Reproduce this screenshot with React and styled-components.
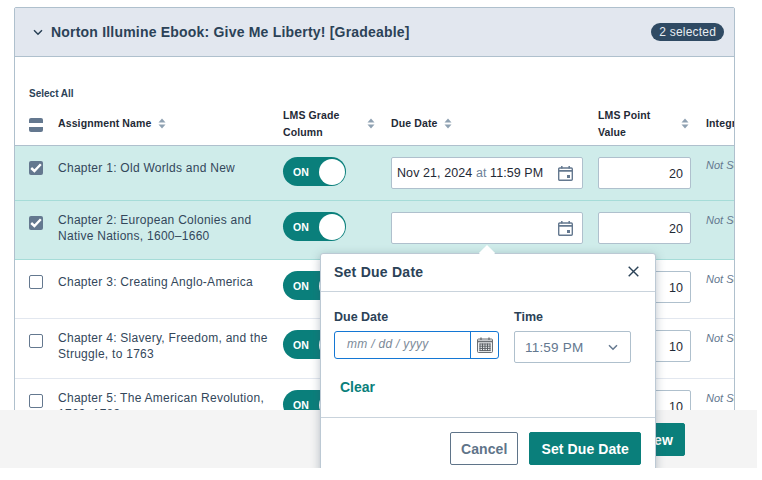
import React from "react";
import styled, { createGlobalStyle } from "styled-components";

const GlobalStyle = createGlobalStyle`
  html, body {
    margin: 0;
    padding: 0;
    background: #fff;
    font-family: "Liberation Sans", Arial, sans-serif;
  }
`;

const Page = styled.div`
  position: relative;
  width: 757px;
  height: 468px;
  overflow: hidden;
  padding: 7px 22px 0 14px;
  box-sizing: border-box;
`;

const Panel = styled.section`
  border: 1px solid #afc0cd;
  border-radius: 2px;
  overflow: hidden;
`;

const PanelHeader = styled.header`
  display: flex;
  align-items: center;
  height: 48px;
  padding: 0 10px 0 18px;
  background: #e2e7ef;
  border-bottom: 1px solid #afc0cd;
`;

const Title = styled.h2`
  flex: 1;
  margin: 0 0 0 8px;
  font-size: 14px;
  font-weight: 700;
  letter-spacing: 0.2px;
  color: #2b4257;
`;

const Badge = styled.span`
  background: #2f4a63;
  color: #e8edf2;
  font-size: 12px;
  line-height: 18px;
  padding: 0 8px;
  border-radius: 9px;
  letter-spacing: 0.2px;
`;

const SelectAll = styled.div`
  padding: 30px 0 0 14px;
  height: 44px;
  box-sizing: border-box;
  font-size: 10px;
  font-weight: 700;
  line-height: 13px;
  color: #2b4257;
`;

const cols = "29px 225px 108px 207px 108px 120px";

const HeadRow = styled.div`
  display: grid;
  grid-template-columns: ${cols};
  align-items: center;
  width: 811px;
  height: 45px;
  padding: 1px 0 0 14px;
  border-bottom: 1px solid #afc0cd;
  box-sizing: border-box;
`;

const HeadCell = styled.div`
  display: flex;
  align-items: center;
  justify-content: ${(p) => (p.$spread ? "space-between" : "flex-start")};
  width: ${(p) => p.$w || "auto"};
  gap: 7px;
  font-size: 10.5px;
  font-weight: 700;
  line-height: 17px;
  letter-spacing: 0.12px;
  color: #1f2a36;
  white-space: nowrap;
`;

const Row = styled.div`
  display: grid;
  grid-template-columns: ${cols};
  width: 811px;
  height: ${(p) => p.$h}px;
  padding: 11px 0 0 14px;
  box-sizing: border-box;
  background: ${(p) => (p.$on ? "#cfecea" : "#fff")};
  border-bottom: 1px solid ${(p) => (p.$on ? "#a6dcd8" : "#e2e7ef")};
`;

const Check = styled.span`
  display: flex;
  align-items: center;
  justify-content: center;
  width: 14px;
  height: 14px;
  margin-top: ${(p) => (p.$head ? "3px" : "4px")};
  border-radius: 2px;
  box-sizing: border-box;
  background: ${(p) => (p.$filled ? "#64788f" : "#fff")};
  border: ${(p) => (p.$filled ? "none" : "1px solid #64788f")};
`;

const Name = styled.div`
  display: flex;
  align-items: center;
  align-self: start;
  width: 216px;
  min-height: 22px;
  font-size: 12px;
  line-height: 16px;
  letter-spacing: 0.27px;
  color: #33475b;
`;

const Toggle = styled.div`
  display: flex;
  align-items: center;
  justify-content: space-between;
  width: 63px;
  height: 29px;
  padding: 0 1px 0 10px;
  box-sizing: border-box;
  border-radius: 15px;
  background: #0a7f7b;
  color: #fff;
  font-size: 10.5px;
  font-weight: 700;
`;

const Knob = styled.span`
  width: 26px;
  height: 26px;
  border-radius: 50%;
  background: #fff;
`;

const DateBox = styled.div`
  display: flex;
  align-items: center;
  justify-content: space-between;
  width: 192px;
  height: 32px;
  padding: 0 9px 0 5px;
  box-sizing: border-box;
  background: #fff;
  border: 1px solid #afc0cd;
  border-radius: 2px;
  font-size: 12.5px;
  letter-spacing: 0.08px;
  color: #1f2a36;
`;

const At = styled.span`
  color: #6d8299;
`;

const PointBox = styled.div`
  width: 93px;
  height: 32px;
  padding: 0 7px;
  box-sizing: border-box;
  background: #fff;
  border: 1px solid #afc0cd;
  border-radius: 2px;
  font-size: 12.5px;
  line-height: 32px;
  text-align: right;
  color: #1f2a36;
`;

const NotSet = styled.div`
  font-size: 11px;
  font-style: italic;
  line-height: 13px;
  margin-top: 2px;
  color: #64788f;
`;

const Footer = styled.footer`
  position: absolute;
  left: 0;
  right: 0;
  bottom: 0;
  height: 58px;
  display: flex;
  justify-content: flex-end;
  padding: 13px 72px 0 0;
  box-sizing: border-box;
  background: #f4f4f4;
`;

const Button = styled.button`
  height: 33px;
  padding: 0 ${(p) => (p.$ghost ? 10 : 11)}px;
  box-sizing: border-box;
  border-radius: 2px;
  border: 1px solid ${(p) => (p.$ghost ? "#5f7489" : "#0a7f7b")};
  background: ${(p) => (p.$ghost ? "#fff" : "#0a7f7b")};
  color: ${(p) => (p.$ghost ? "#5f7489" : "#fff")};
  font-family: inherit;
  font-size: 14px;
  font-weight: 700;
  letter-spacing: 0.1px;
`;

const Popover = styled.div`
  position: absolute;
  left: 320px;
  top: 253px;
  width: 336px;
  border: 1px solid #bcc9d4;
  border-radius: 3px;
  box-sizing: border-box;
  background: #fff;
  box-shadow: 0 2px 10px rgba(60, 80, 100, 0.35);

  &::before {
    content: "";
    position: absolute;
    left: 159px;
    top: -8px;
    width: 14px;
    height: 14px;
    background: #fff;
    transform: rotate(45deg) scale(0.82);
  }
`;

const PopHeader = styled.div`
  position: relative;
  display: flex;
  align-items: center;
  justify-content: space-between;
  height: 38px;
  padding: 0 16px 2px 13px;
  box-sizing: border-box;
  border-bottom: 1px solid #c9d3dc;
`;

const PopTitle = styled.h3`
  margin: 0;
  font-size: 14px;
  font-weight: 700;
  letter-spacing: 0.25px;
  color: #2b4257;
`;

const PopBody = styled.div`
  height: 126px;
  padding: 17px 13px 0;
  box-sizing: border-box;
  border-bottom: 1px solid #c9d3dc;
`;

const Fields = styled.div`
  display: flex;
  gap: 15px;
`;

const Field = styled.div`
  display: flex;
  flex-direction: column;
  gap: 6px;
`;

const Label = styled.label`
  font-size: 12.5px;
  font-weight: 700;
  line-height: 16px;
  color: #2b4257;
`;

const DateInput = styled.div`
  display: flex;
  width: 165px;
  height: 28px;
  box-sizing: border-box;
  border: 1px solid #1477d4;
  border-radius: 3px;
`;

const Placeholder = styled.span`
  flex: 1;
  padding-left: 12px;
  border-right: 1px solid #1477d4;
  font-size: 12px;
  font-style: italic;
  line-height: 24px;
  letter-spacing: 0.3px;
  color: #7c8a98;
`;

const CalButton = styled.span`
  display: flex;
  align-items: center;
  justify-content: center;
  width: 27px;
`;

const Select = styled.div`
  display: flex;
  align-items: center;
  justify-content: space-between;
  width: 117px;
  height: 32px;
  padding: 0 12px 0 10px;
  box-sizing: border-box;
  border: 1px solid #afc0cd;
  border-radius: 2px;
  font-size: 13.5px;
  letter-spacing: 0.2px;
  color: #64788f;
`;

const Clear = styled.a`
  display: block;
  margin: 15px 0 0 6px;
  font-size: 14px;
  font-weight: 700;
  line-height: 18px;
  color: #0a7f7b;
`;

const PopFooter = styled.div`
  display: flex;
  justify-content: flex-end;
  gap: 11px;
  padding: 14px 14px 8px;
`;

const Sort = () => (
  <svg width="8" height="11" viewBox="0 0 8 11" fill="#8fa1b2">
    <path d="M4 0.5 7.5 4.5H.5Z" />
    <path d="M4 10.5 .5 6.5H7.5Z" />
  </svg>
);

const Chevron = ({ color = "#2b4257" }) => (
  <svg width="10" height="7" viewBox="0 0 10 7" fill="none" stroke={color} strokeWidth="1.5">
    <path d="M1 1.2 5 5.2 9 1.2" />
  </svg>
);

const CheckMark = () => (
  <svg width="12" height="10" viewBox="0 0 12 10" fill="none" stroke="#fff" strokeWidth="2.4">
    <path d="M1.2 5 4.4 8 10.8 1.2" />
  </svg>
);

const CalendarIcon = () => (
  <svg width="15" height="15" viewBox="0 0 15 15" fill="none">
    <rect x="0.7" y="2" width="13.6" height="12.3" rx="1" stroke="#64788f" strokeWidth="1.4" />
    <path d="M1 4.8H14" stroke="#64788f" strokeWidth="1.8" />
    <path d="M3.8 0V2.5M11.2 0V2.5" stroke="#64788f" strokeWidth="1.5" />
    <rect x="9" y="9" width="3" height="3" fill="#64788f" />
  </svg>
);

const GridCalendar = () => (
  <svg width="16" height="16" viewBox="0 0 16 16" fill="none">
    <rect x="0.5" y="2" width="15" height="13.5" rx="1" fill="#eef0f2" stroke="#6b6f74" />
    <path d="M.5 4.5H15.5" stroke="#6b6f74" strokeWidth="1.6" />
    <path d="M4 .5V3M12 .5V3" stroke="#6b6f74" strokeWidth="1.4" />
    <path
      d="M3 6.5V14M5.5 6.5V14M8 6.5V14M10.5 6.5V14M13 6.5V14M2.5 7H13.5M2.5 9.2H13.5M2.5 11.4H13.5M2.5 13.6H13.5"
      stroke="#5c6166"
      strokeWidth="1"
    />
  </svg>
);

const CloseIcon = () => (
  <svg width="11" height="11" viewBox="0 0 11 11" fill="none" stroke="#2b4257" strokeWidth="1.4">
    <path d="M.7 .7 10.3 10.3M10.3 .7 .7 10.3" />
  </svg>
);

const rows = [
  { name: "Chapter 1: Old Worlds and New", on: true, h: 55, date: true, points: 20 },
  { name: "Chapter 2: European Colonies and Native Nations, 1600–1660", on: true, h: 59, points: 20 },
  { name: "Chapter 3: Creating Anglo-America", h: 59, points: 10 },
  { name: "Chapter 4: Slavery, Freedom, and the Struggle, to 1763", h: 60, points: 10 },
  { name: "Chapter 5: The American Revolution, 1763–1783", h: 59, points: 10 },
];

export default function App() {
  return (
    <>
      <GlobalStyle />
      <Page>
        <Panel>
          <PanelHeader>
            <Chevron />
            <Title>Norton Illumine Ebook: Give Me Liberty! [Gradeable]</Title>
            <Badge>2 selected</Badge>
          </PanelHeader>
          <SelectAll>Select All</SelectAll>
          <HeadRow>
            <Check $filled $head>
              <svg width="14" height="4"><rect width="14" height="4" fill="#fff" /></svg>
            </Check>
            <HeadCell>
              Assignment Name <Sort />
            </HeadCell>
            <HeadCell $spread $w="92px">
              <span>
                LMS Grade
                <br />
                Column
              </span>
              <Sort />
            </HeadCell>
            <HeadCell>
              Due Date <Sort />
            </HeadCell>
            <HeadCell $spread $w="91px">
              <span>
                LMS Point
                <br />
                Value
              </span>
              <Sort />
            </HeadCell>
            <HeadCell>Integration</HeadCell>
          </HeadRow>
          {rows.map((row) => (
            <Row key={row.name} $on={row.on} $h={row.h}>
              <Check $filled={row.on}>{row.on && <CheckMark />}</Check>
              <Name>
                <span>{row.name}</span>
              </Name>
              <Toggle>
                ON
                <Knob />
              </Toggle>
              <DateBox>
                <span>
                  {row.date && (
                    <>
                      Nov 21, 2024 <At>at</At> 11:59 PM
                    </>
                  )}
                </span>
                <CalendarIcon />
              </DateBox>
              <PointBox>{row.points}</PointBox>
              <NotSet>Not Set</NotSet>
            </Row>
          ))}
        </Panel>
        <Footer>
          <Button>Preview</Button>
        </Footer>
        <Popover>
          <PopHeader>
            <PopTitle>Set Due Date</PopTitle>
            <CloseIcon />
          </PopHeader>
          <PopBody>
            <Fields>
              <Field>
                <Label>Due Date</Label>
                <DateInput>
                  <Placeholder>mm / dd / yyyy</Placeholder>
                  <CalButton>
                    <GridCalendar />
                  </CalButton>
                </DateInput>
              </Field>
              <Field>
                <Label>Time</Label>
                <Select>
                  11:59 PM
                  <Chevron color="#64788f" />
                </Select>
              </Field>
            </Fields>
            <Clear>Clear</Clear>
          </PopBody>
          <PopFooter>
            <Button $ghost>Cancel</Button>
            <Button>Set Due Date</Button>
          </PopFooter>
        </Popover>
      </Page>
    </>
  );
}
